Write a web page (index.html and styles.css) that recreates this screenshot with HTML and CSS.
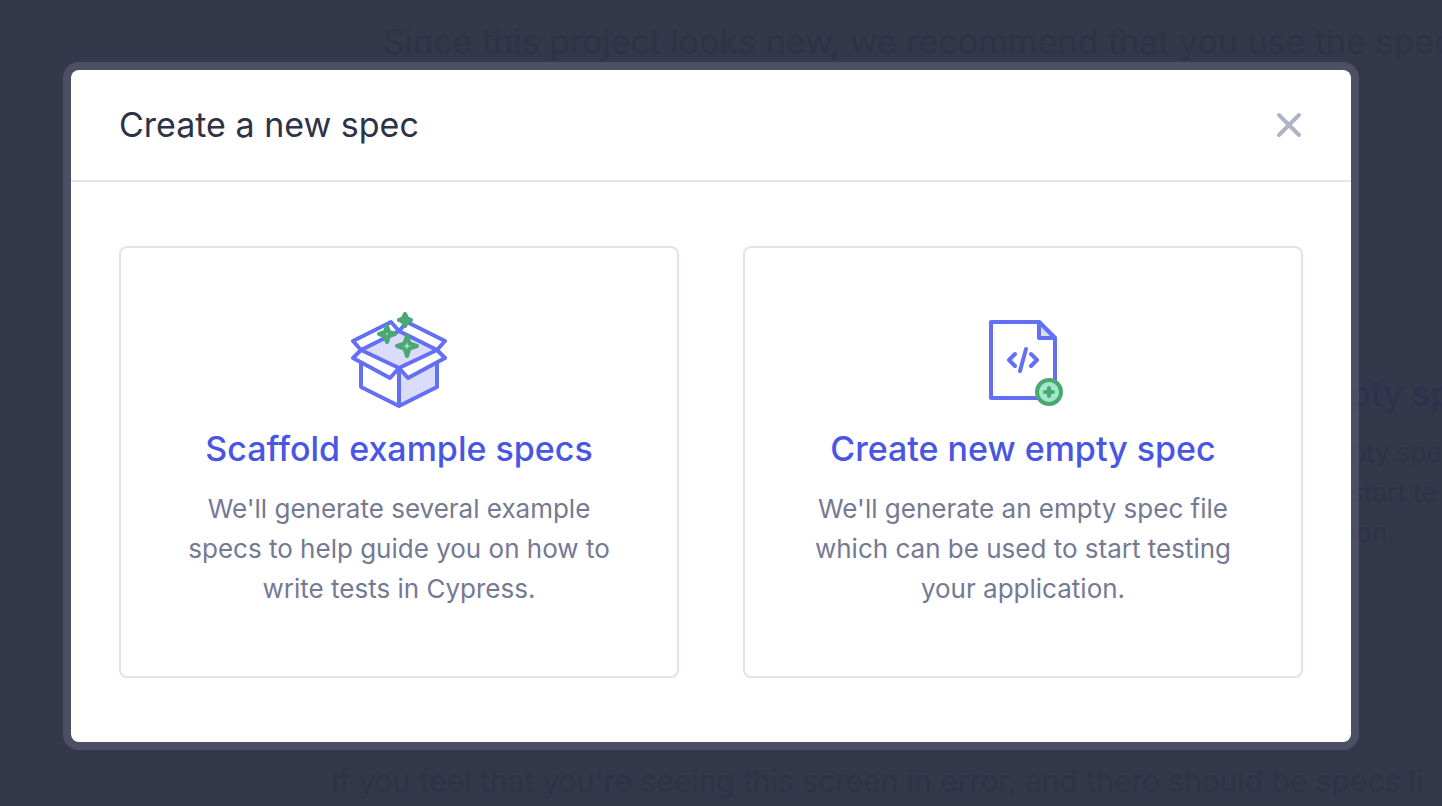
FILE: index.html
```html
<!DOCTYPE html>
<html lang="en">
<head>
<meta charset="utf-8">
<title>Create a new spec</title>
<meta name="viewport" content="width=device-width, initial-scale=1">
<link rel="stylesheet" href="styles.css">
</head>
<body>
<div class="page" aria-hidden="true">
  <p class="page-intro">Since this project looks new, we recommend that you use the spec</p>
  <div class="page-card">
    <p class="page-card-title">pty sp</p>
    <p class="page-card-text">pty spe<br>start te<br>ion.</p>
  </div>
  <p class="page-note">If you feel that you're seeing this screen in error, and there should be specs li</p>
</div>
<div class="overlay">
  <section class="modal" role="dialog" aria-modal="true" aria-labelledby="modal-title">
    <header class="modal-header">
      <h1 class="modal-title" id="modal-title">Create a new spec</h1>
      <button class="close" type="button" aria-label="Close">
        <svg width="28" height="28" viewBox="0 0 28 28" fill="none" stroke="currentColor" stroke-width="4" stroke-linecap="round"><path d="M4 4l20 20M24 4L4 24"/></svg>
      </button>
    </header>
    <div class="modal-body">
      <button class="card" type="button">
        <svg class="card-icon" viewBox="0 0 96 96" fill="none" stroke-width="4" stroke-linejoin="round" stroke-linecap="round" aria-hidden="true">
          <path fill="#dadcfa" d="M10 38L48 19L86 38L48 56ZM48 56L57 66L86 50V75L48 94Z"/>
          <g stroke="#6470f3">
            <path d="M10 50V75L48 94L86 75V50M48 57V94"/>
            <path fill="#fff" d="M10 38L2 29L40 10L48 19Z"/>
            <path fill="#fff" d="M86 38L94 29L56 10L48 19Z"/>
            <path fill="#fff" d="M10 38L2 46L39 66L48 56Z"/>
            <path fill="#fff" d="M86 38L94 46L57 66L48 56Z"/>
          </g>
          <g stroke="#4ba872" fill="#a3e7cb">
            <path fill="#4ba872" d="M54 2L56 6L60 8L56 10L54 14L52 10L48 8L52 6Z"/>
            <path d="M36 14L38 20L44 22L38 24L36 30L34 24L28 22L34 20Z"/>
            <path d="M56 24L58.500 31.500L66 34L58.500 36.500L56 44L53.500 36.500L46 34L53.500 31.500Z"/>
          </g>
        </svg>
        <span class="card-title">Scaffold example specs</span>
        <span class="card-text">We'll generate several example specs to help guide you on how to write tests in Cypress.</span>
      </button>
      <button class="card" type="button">
        <svg class="card-icon" viewBox="0 0 96 96" fill="none" stroke-width="4" stroke-linejoin="round" stroke-linecap="round" aria-hidden="true">
          <g stroke="#6470f3">
            <path d="M64 10H16V86H80V26Z"/>
            <path fill="#dadcfa" d="M64 10V26H80Z"/>
            <path d="M40 42L34 48L40 54M56 42L62 48L56 54M51 37L45 59"/>
          </g>
          <circle cx="74" cy="80" r="12" fill="#a3e7cb" stroke="#4ba872"/>
          <path stroke="#4ba872" d="M70 80H78M74 76V84"/>
        </svg>
        <span class="card-title">Create new empty spec</span>
        <span class="card-text">We'll generate an empty spec file which can be used to start testing your application.</span>
      </button>
    </div>
  </section>
</div>
</body>
</html>
```
FILE: styles.css
```css
* { box-sizing: border-box; }

body {
  margin: 0;
  min-height: 100vh;
  background: #35374a;
  color: #2e3247;
  font-family: Inter, "Liberation Sans", sans-serif;
}

p, h1 { margin: 0; font-weight: 400; }

button {
  border: 0;
  padding: 0;
  background: none;
  font: inherit;
  cursor: pointer;
}

/* Page content dimmed behind the dialog */
.page {
  position: absolute;
  inset: 0;
  overflow: hidden;
  display: flex;
  flex-direction: column;
  padding: 18px 0 1px;
  color: #303246;
  white-space: nowrap;
}

.page-intro {
  padding-left: 383px;
  font-size: 34px;
  line-height: 48px;
}

.page-card {
  align-self: flex-end;
  width: 92px;
  margin: 304px 0 auto;
}

.page-card-title {
  margin-bottom: 15px;
  color: #30314f;
  font-size: 34px;
  font-weight: 500;
  line-height: 48px;
}

.page-card-text { font-size: 26px; line-height: 40px; }

.page-note {
  padding-left: 331px;
  font-size: 30px;
  line-height: 48px;
}

.overlay {
  position: relative;
  padding: 70px 91px 64px 71px;
}

.modal {
  border-radius: 8px;
  background: #fff;
  box-shadow: 0 0 0 8px rgba(90, 92, 114, 0.65);
}

.modal-header {
  display: flex;
  align-items: center;
  justify-content: space-between;
  padding: 31px 48px;
  border-bottom: 2px solid #e1e3ed;
}

.modal-title { font-size: 34px; line-height: 48px; }

.close { display: flex; color: #afb3c7; }

.modal-body {
  display: grid;
  grid-template-columns: 1fr 1fr;
  gap: 64px;
  padding: 64px 48px;
}

.card {
  display: flex;
  flex-direction: column;
  align-items: center;
  padding: 64px 62px 67px;
  border: 2px solid #e1e3ed;
  border-radius: 8px;
  text-align: center;
}

.card-icon { width: 96px; height: 96px; }

.card-title {
  margin: 17px 0 16px;
  color: #4956e3;
  font-size: 34px;
  font-weight: 500;
  line-height: 48px;
}

.card-text {
  color: #747994;
  font-size: 26px;
  line-height: 40px;
}
```
